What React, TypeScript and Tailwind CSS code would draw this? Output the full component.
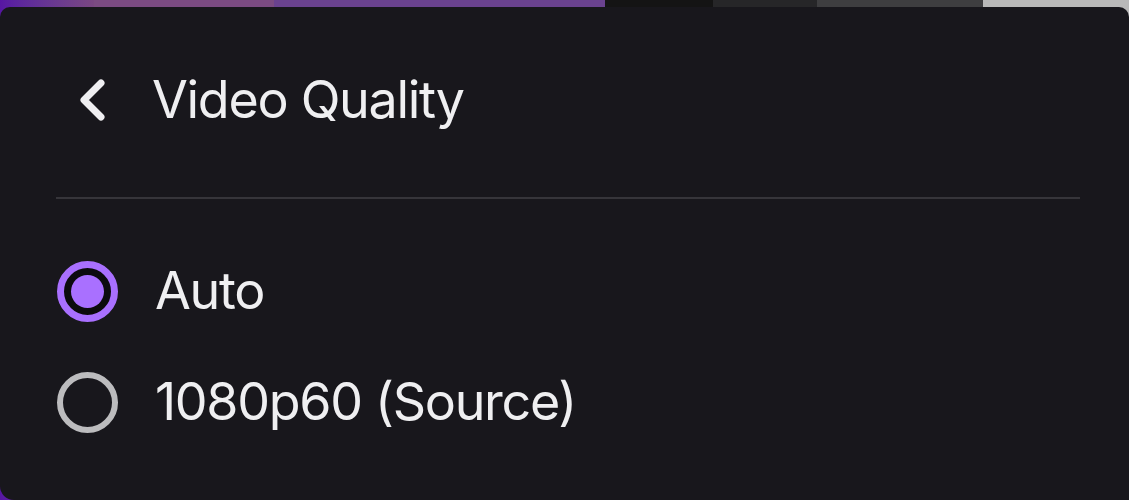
import { type FC } from 'react';

const font = { fontFamily: 'Inter, "Noto Sans", sans-serif' };

const ChevronLeft: FC = () => (
  <svg width="32" height="48" viewBox="0 0 32 48" className="shrink-0">
    <polyline
      points="24,7 7,24 24,41"
      fill="none"
      stroke="#efeff1"
      strokeWidth="7"
      strokeLinecap="round"
      strokeLinejoin="round"
    />
  </svg>
);

const Radio: FC<{ checked?: boolean }> = ({ checked }) =>
  checked ? (
    <span className="w-[61px] h-[61px] shrink-0 rounded-full border-[7px] border-[#a970ff] bg-[#0c0b0e] flex items-center justify-center">
      <span className="w-[33px] h-[33px] rounded-full bg-[#a970ff]" />
    </span>
  ) : (
    <span className="w-[61px] h-[61px] shrink-0 rounded-full border-[6px] border-[#bcbcbe]" />
  );

const Option: FC<{ label: string; checked?: boolean; className?: string }> = ({ label, checked, className }) => (
  <div className={`flex items-center h-[60px] gap-[37px] ${className ?? ''}`}>
    <Radio checked={checked} />
    <span className="text-[52px] leading-none tracking-[-1.3px] text-[#efeff1] whitespace-nowrap">{label}</span>
  </div>
);

export default function App() {
  return (
    <div className="grid w-[1129px] h-[500px] overflow-hidden" style={font}>
      {/* video frame behind the menu */}
      <div className="col-start-1 row-start-1 flex h-full">
        <div className="w-[94px] bg-gradient-to-r from-[#5716a3] to-[#7a4782]" />
        <div className="w-[180px] bg-[#7b4b82]" />
        <div className="w-[331px] bg-[#6a428f]" />
        <div className="w-[108px] bg-[#141414]" />
        <div className="w-[104px] bg-[#262628]" />
        <div className="w-[166px] bg-[#3e3e40]" />
        <div className="flex-1 bg-[#b9b9b9]" />
      </div>

      <div className="col-start-1 row-start-1 mt-[7px] h-[493px] bg-[#18171c] rounded-t-[10px] rounded-bl-[14px] pl-[56px] flex flex-col">
        <div className="flex items-center h-[60px] mt-[63px] pl-[21px]">
          <ChevronLeft />
          <span className="ml-[43px] text-[52px] leading-none tracking-[-1.3px] text-[#efeff1] whitespace-nowrap">Video Quality</span>
        </div>

        <div className="w-[1024px] h-[2px] bg-[#36353a] mt-[67px]" />

        <Option label="Auto" checked className="mt-[62px] pl-px" />
        <Option label="1080p60 (Source)" className="mt-[51px] pl-px" />
      </div>
    </div>
  );
}
